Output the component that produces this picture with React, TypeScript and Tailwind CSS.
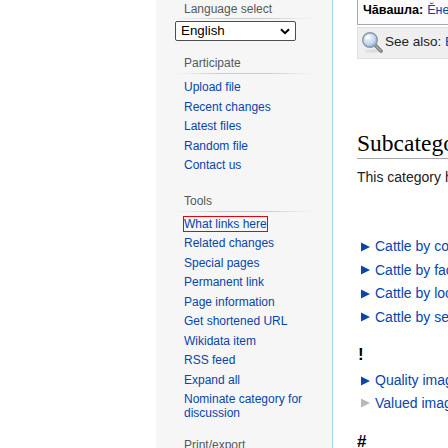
import React from 'react'

const participate = ['Upload file', 'Recent changes', 'Latest files', 'Random file', 'Contact us']
const tools = [
  'What links here',
  'Related changes',
  'Special pages',
  'Permanent link',
  'Page information',
  'Get shortened URL',
  'Wikidata item',
  'RSS feed',
  'Expand all',
  'Nominate category for discussion',
]

// 見出し下のグラデーション線
function Rule({ className = '' }: { className?: string }) {
  return (
    <div
      className={`h-px bg-[linear-gradient(to_right,rgba(200,204,209,0)_0,#c8ccd1_33%,#c8ccd1_66%,rgba(200,204,209,0)_100%)] ${className}`}
    />
  )
}

function Heading({ children, className = '' }: { children: React.ReactNode; className?: string }) {
  return <div className={`pl-[9px] text-[12px] leading-[14px] text-[#54595d] ${className}`}>{children}</div>
}

function Arrow({ grey }: { grey?: boolean }) {
  return (
    <svg width="9" height="10" viewBox="0 0 9 10" className="shrink-0">
      <path d="M0 0.5L9 5L0 9.5Z" fill={grey ? '#b8b8b8' : '#0b47a8'} />
    </svg>
  )
}

function Magnifier() {
  return (
    <svg width="22" height="22" viewBox="0 0 22 22" className="shrink-0">
      <defs>
        <radialGradient id="lens" cx="0.4" cy="0.35" r="0.7">
          <stop offset="0" stopColor="#f4f8fd" />
          <stop offset="0.6" stopColor="#c4d8ee" />
          <stop offset="1" stopColor="#7fa4cf" />
        </radialGradient>
      </defs>
      <ellipse cx="12" cy="20" rx="8" ry="1.6" fill="#000" opacity="0.08" />
      <line x1="14" y1="14" x2="20" y2="20" stroke="#6d7278" strokeWidth="3.6" strokeLinecap="round" />
      <line x1="14" y1="14" x2="20" y2="20" stroke="#a9adb2" strokeWidth="1.6" strokeLinecap="round" />
      <circle cx="9" cy="9" r="7.3" fill="url(#lens)" stroke="#8a98a8" strokeWidth="1.4" />
      <ellipse cx="6.8" cy="6.3" rx="2.6" ry="1.7" fill="#fff" opacity="0.85" transform="rotate(-35 6.8 6.3)" />
    </svg>
  )
}

function Item({ label, grey, lead }: { label: string; grey?: boolean; lead: string }) {
  return (
    <div className={`flex items-center gap-[5px] pl-[4px] whitespace-nowrap text-[14px] text-[#0645ad] ${lead}`}>
      <Arrow grey={grey} />
      <span>{label}</span>
    </div>
  )
}

export default function App() {
  return (
    <div className="flex w-[448px] h-[448px] overflow-hidden bg-white font-['Liberation_Sans',Arial,sans-serif]">
      <div className="w-[156px] shrink-0" />

      {/* サイドバー */}
      <div className="w-[176px] shrink-0 bg-[#f6f6f6] px-[19px]">
        <Heading className="pt-[2px]">Language select</Heading>
        <Rule className="mt-[2px]" />
        <div className="mt-[2px] flex h-[20px] w-[121px] items-center justify-between rounded-[2px] border border-[#4d4d4d] bg-white pl-[5px] pr-[5px] text-[13.33px] text-black">
          <span>English</span>
          <svg width="10" height="7" viewBox="0 0 10 7">
            <path d="M1 1.2L5 5.2L9 1.2" fill="none" stroke="#000" strokeWidth="2" />
          </svg>
        </div>

        <Heading className="mt-[15px]">Participate</Heading>
        <Rule className="mt-[3px]" />
        <ul className="mt-[4px] pl-[9px]">
          {participate.map((t) => (
            <li key={t} className="py-[3px] text-[12px] leading-[13.5px] text-[#0645ad]">
              {t}
            </li>
          ))}
        </ul>

        <Heading className="mt-[18px]">Tools</Heading>
        <Rule className="mt-[3px]" />
        <ul className="mt-[3px] pl-[9px]">
          {tools.map((t, i) => (
            <li key={t} className="py-[3px] text-[12px] leading-[13.5px] text-[#0645ad]">
              <span className={i === 0 ? 'outline outline-1 outline-[#e8000b]' : ''}>{t}</span>
            </li>
          ))}
        </ul>

        <Heading className="mt-[15px]">Print/export</Heading>
      </div>

      {/* 本文 */}
      <div className="min-w-0 flex-1 overflow-hidden border-l border-[#a7d7f9] pl-[24px] text-[#202122]">
        <div className="flex h-[25px] w-[400px] items-start border-b border-l border-[#a2a9b1] bg-[#fcfcfc] pl-[5px] text-[12.6px] leading-[20px] whitespace-nowrap">
          <b className="text-black">Чăвашла:</b>
          <span className="ml-[4px] text-[#0645ad]">Ĕне</span>
        </div>

        <div className="mt-[2px] flex h-[32px] w-[400px] items-center gap-[2px] border border-[#e0e0e0] bg-[#efefef] pl-[3px] pb-[2px] whitespace-nowrap">
          <Magnifier />
          <span className="text-[13.5px] text-[#222]">
            See also: <span className="text-[#0645ad]">Bovinae</span>
          </span>
        </div>

        <h2 className="mt-[69px] w-[400px] border-b border-[#a2a9b1] font-['Liberation_Serif',serif] text-[23.5px] leading-[30px] whitespace-nowrap text-black">
          Subcategories
        </h2>
        <p className="mt-[8px] text-[14px] leading-[20px] whitespace-nowrap">
          This category has the following 6 subcategories, out of 6 total.
        </p>

        <div className="mt-[48px]">
          <Item label="Cattle by color" lead="h-[23.5px]" />
          <Item label="Cattle by facial features" lead="h-[23.5px]" />
          <Item label="Cattle by location" lead="h-[23.5px]" />
          <Item label="Cattle by sex" lead="h-[23.5px]" />
        </div>

        <div className="mt-[16px] pl-[1px] text-[17px] font-bold leading-[20px] text-black">!</div>
        <div className="mt-[4.5px]">
          <Item label="Quality images of cattle" lead="h-[22.5px]" />
          <Item label="Valued images of cattle" grey lead="h-[22.5px]" />
        </div>

        <div className="mt-[17px] text-[17px] font-bold leading-[20px] text-black">#</div>
      </div>
    </div>
  )
}
